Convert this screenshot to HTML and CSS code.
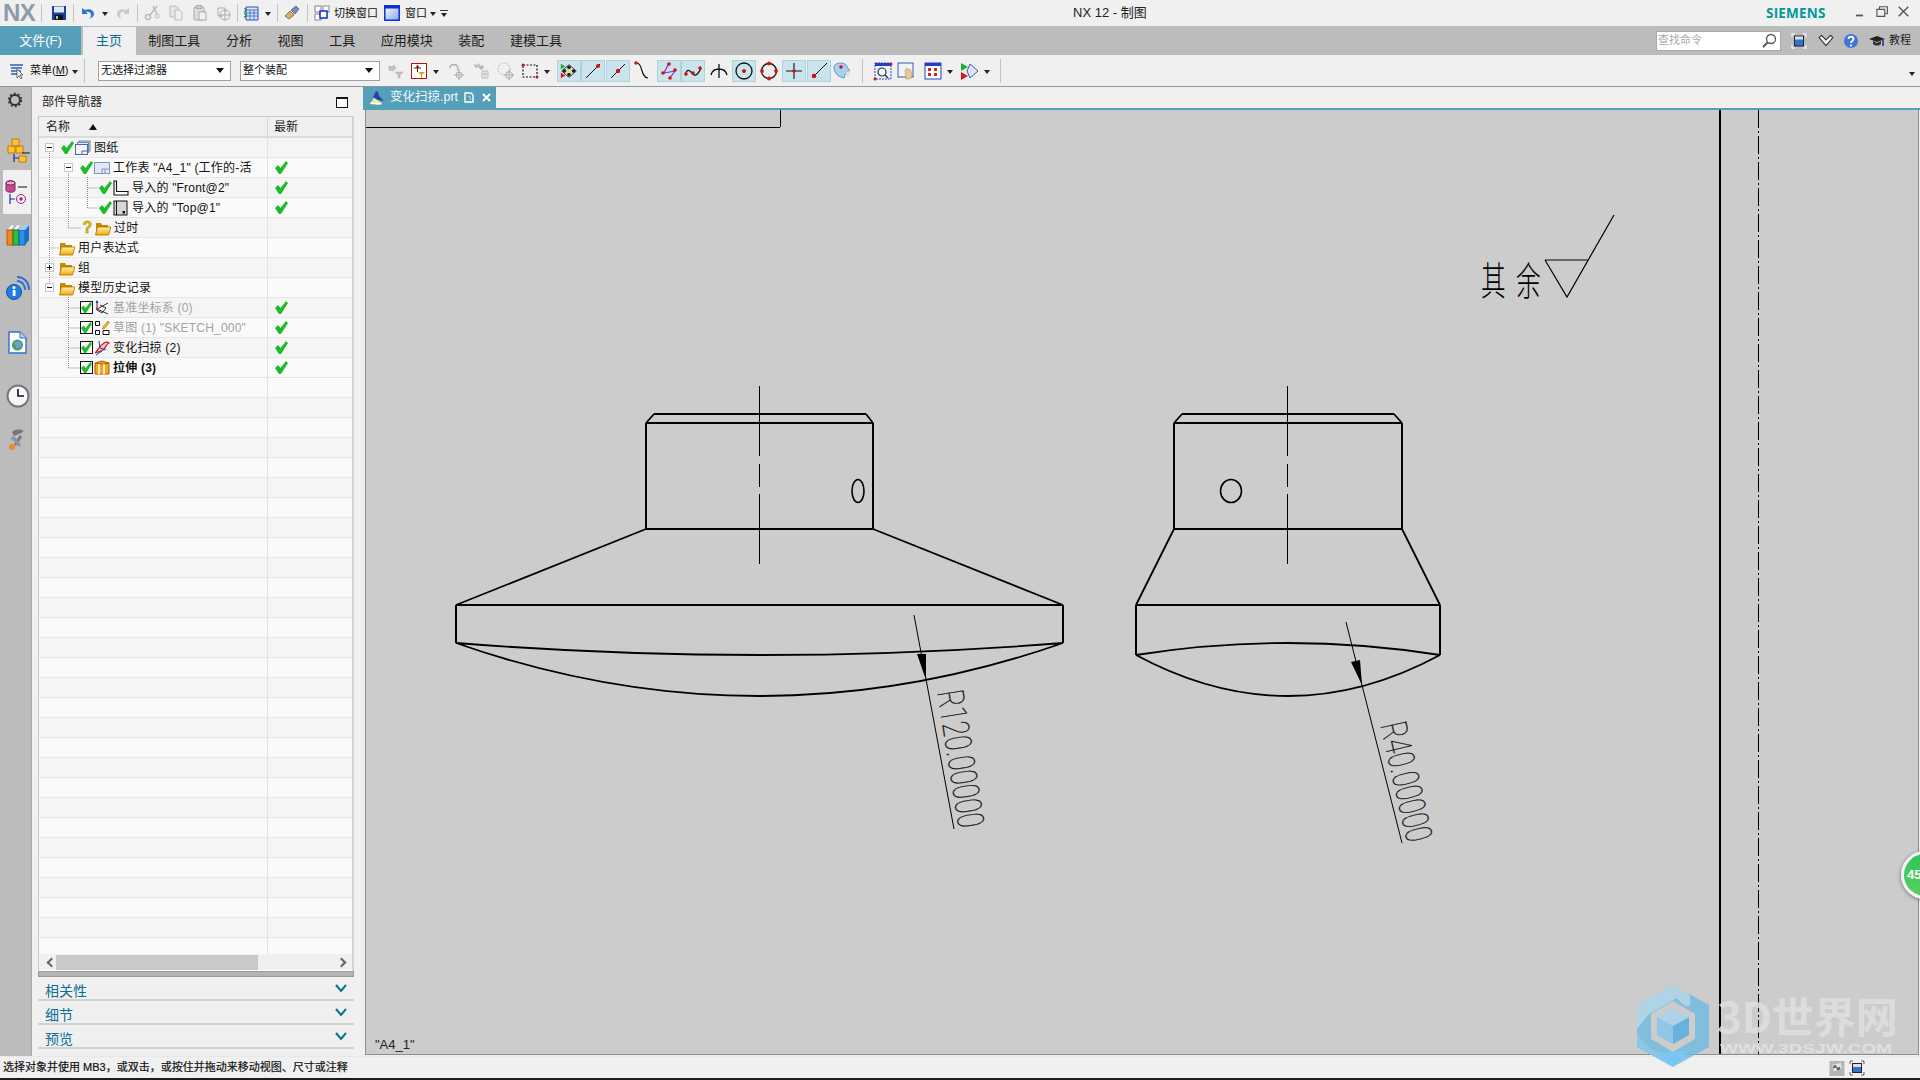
FILE: index.html
```html
<!DOCTYPE html>
<html lang="zh">
<head>
<meta charset="utf-8">
<title>NX 12 - 制图</title>
<link rel="stylesheet" href="styles.css">
</head>
<body>
<svg class="defs" aria-hidden="true">
  <defs>
    <linearGradient id="gf" x1="0" y1="0" x2="0" y2="1"><stop offset="0" stop-color="#fff3b0"/><stop offset="1" stop-color="#f2a900"/></linearGradient>
    <linearGradient id="gb" x1="0" y1="0" x2="1" y2="1"><stop offset="0" stop-color="#ffffff"/><stop offset="1" stop-color="#7fa8e8"/></linearGradient>
    <symbol id="check" viewBox="0 0 13 13"><path d="M0 7l3-3 2.500 3L11 0l2 2-7 11H4z" fill="#1dbb2b"/></symbol>
    <symbol id="folder" viewBox="0 0 16 16"><path d="M1 3h5l1 2h6v10H1z" fill="#c98a00"/><path d="M2.500 7H16l-2.500 8H.5z" fill="url(#gf)" stroke="#a87000" stroke-width=".8"/></symbol>
    <symbol id="sheets" viewBox="0 0 16 16"><rect x="4" y="1" width="11" height="10" fill="#dfe6f4" stroke="#6d83b0"/><rect x="2.500" y="2.500" width="11" height="10" fill="#e6ebf7" stroke="#6d83b0"/><rect x=".5" y="4.500" width="12" height="10" fill="#f2f5fb" stroke="#53689a"/><path d="M7 14V11h5" fill="none" stroke="#53689a"/></symbol>
    <symbol id="sheet" viewBox="0 0 16 16"><rect x=".5" y="2.500" width="15" height="11" fill="#e3e9f6" stroke="#8295bd"/><path d="M8 13v-4h7M11 9v4" fill="none" stroke="#8295bd"/></symbol>
    <symbol id="front" viewBox="0 0 16 16"><path d="M1 1h2.500v10.500H15V15H1z" fill="#fff" stroke="#111" stroke-width="1.100"/></symbol>
    <symbol id="top" viewBox="0 0 16 16"><rect x="1" y="1" width="13" height="14" fill="#d6d6d6" stroke="#111"/><path d="M3.500 1v14" stroke="#111"/><rect x="9.500" y="11" width="2.500" height="2.500" fill="#111"/></symbol>
    <symbol id="datum" viewBox="0 0 16 16"><path d="M3 1v8l11 5M3 9l11-6M6 5l6 3-4 5-5-3" fill="none" stroke="#333"/><path d="M1.500 3L3 0l1.500 3z" fill="#2040c0"/><circle cx="3" cy="9" r="1.200" fill="#d02020"/></symbol>
    <symbol id="sketch" viewBox="0 0 16 16"><path d="M1.500 1.500h4v4h-4zM1.500 10.500h4v4h-4zM9 10.500h6v4H9z" fill="#fff" stroke="#111"/><path d="M9 7l5-6 1.500 1.500-5 6L8.500 9z" fill="#f0c020" stroke="#a06000" stroke-width=".6"/></symbol>
    <symbol id="sweep" viewBox="0 0 16 16"><path d="M1 13c3-2 4-7 9-10 2-1 4-1 5 0-3 1-3 5-6 7-3 2-5 2-8 3z" fill="#f3c2c2" stroke="#d01818" stroke-width="1.200"/><path d="M5 1l1 7 6 2M2 15l6-4" fill="none" stroke="#2540c0"/></symbol>
    <symbol id="extrude" viewBox="0 0 16 16"><path d="M1 3l7-2 7 2v11H1z" fill="#f7a520" stroke="#b35b00"/><path d="M5 3v11M10 3v11" stroke="#fff2b0" stroke-width="2"/><path d="M1 3l7 1 7-1" fill="none" stroke="#b35b00"/></symbol>
    <symbol id="save" viewBox="0 0 16 16"><path d="M1 1h14v14H1z" fill="#1a3f9a"/><rect x="3" y="1.500" width="10" height="6" fill="#dfe8fa"/><rect x="4" y="10" width="8" height="5" fill="#111"/><rect x="5" y="11" width="2" height="3" fill="#bbb"/></symbol>
    <symbol id="undo" viewBox="0 0 16 16"><path d="M2 3v6h6L6 7c3-1 5 1 5 3 0 2-1 3-2 4 3-1 5-3 5-5 0-4-5-6-9-4z" fill="#2f74d0"/></symbol>
    <symbol id="redo" viewBox="0 0 16 16"><path d="M14 3v6H8l2-2c-3-1-5 1-5 3 0 2 1 3 2 4-3-1-5-3-5-5 0-4 5-6 9-4z" fill="#c9c9c9"/></symbol>
    <symbol id="cut" viewBox="0 0 16 16"><path d="M13 1L6 10M9 1l4 8" fill="none" stroke="#bbb" stroke-width="1.500"/><circle cx="4" cy="12" r="2.500" fill="none" stroke="#bbb" stroke-width="1.500"/><circle cx="13" cy="11" r="2" fill="none" stroke="#bbb"/></symbol>
    <symbol id="copy" viewBox="0 0 16 16"><path d="M2 1h6l2 2v9H2z" fill="#e6e6e6" stroke="#bbb"/><path d="M7 5h5l2 2v8H7z" fill="#eee" stroke="#bbb"/></symbol>
    <symbol id="paste" viewBox="0 0 16 16"><rect x="2" y="2" width="10" height="13" rx="1" fill="#ddd" stroke="#aaa"/><rect x="4.500" y=".5" width="5" height="3" fill="#ccc" stroke="#aaa"/><rect x="7" y="7" width="7" height="8" fill="#f2f2f2" stroke="#aaa"/></symbol>
    <symbol id="pastesp" viewBox="0 0 16 16"><path d="M2 3h7v4M2 3v8h5" fill="none" stroke="#aaa"/><circle cx="9" cy="10" r="5" fill="none" stroke="#aaa"/><path d="M9 5v10M4 10h10" stroke="#aaa"/></symbol>
    <symbol id="table" viewBox="0 0 16 16"><path d="M3 2h12v13H3z" fill="#d8e4f8" stroke="#2a4fb0"/><path d="M3 5h12M3 8h12M3 11h12M7 5v10M11 5v10" stroke="#2a4fb0" stroke-width=".7"/><path d="M1 4c3-1 3 3 0 3M1 9c3-1 3 3 0 3" fill="none" stroke="#1b8a3a" stroke-width="1.300"/></symbol>
    <symbol id="brush" viewBox="0 0 16 16"><path d="M1 11l5-5 4 4-5 4z" fill="#d9b26a" stroke="#6a4a10" stroke-width=".7"/><path d="M7 5l5-4 3 3-4 5z" fill="#7a8bb8" stroke="#3a4a80" stroke-width=".7"/></symbol>
    <symbol id="switch" viewBox="0 0 16 16"><rect x="1" y="1" width="6" height="6" fill="#fff" stroke="#888"/><rect x="9" y="1" width="6" height="6" fill="#fff" stroke="#888"/><rect x="1" y="9" width="6" height="6" fill="#fff" stroke="#888"/><rect x="6" y="6" width="7" height="7" fill="#fff" stroke="#0b2ad8" stroke-width="1.500"/></symbol>
    <symbol id="window" viewBox="0 0 16 16"><rect x=".8" y=".8" width="14.400" height="14.400" fill="url(#gb)" stroke="#0b2ad8" stroke-width="1.500"/><rect x="1" y="1" width="14" height="2.500" fill="#0b2ad8"/></symbol>
    <symbol id="menuic" viewBox="0 0 16 16"><path d="M1 2h13M2 5h11M2 8h10M2 11h7" stroke="#2b60b0" stroke-width="1.300"/><path d="M8 6v9l2-2 2 3 1-1-2-3h3z" fill="#fff" stroke="#333" stroke-width=".7"/></symbol>
    <symbol id="fgray" viewBox="0 0 16 16"><path d="M1 3l3 1 2-2 2 3-3 3-4-1zM7 9h8l-3 3v3h-2v-3z" fill="#c2c2c2" stroke="#aaa" stroke-width=".5"/></symbol>
    <symbol id="fred" viewBox="0 0 16 16"><rect x=".5" y=".5" width="15" height="15" fill="#fff" stroke="#b01515"/><path d="M3 5h7M6.500 2v7" stroke="#222"/><path d="M5 3.500l1.500-1.500L8 3.500 6.500 7z" fill="#c41212"/><path d="M7 9h7l-3 3v3h-1v-3z" fill="#f0a010"/></symbol>
    <symbol id="t1" viewBox="0 0 20 20"><path d="M3 7c0-4 7-5 8 0" fill="none" stroke="#aaa" stroke-width="1.500"/><path d="M11 8l-2-1 2 3 2-3z" fill="#aaa"/><circle cx="12" cy="14" r="3" fill="none" stroke="#aaa"/><path d="M12 9v10M7 14h10" stroke="#aaa"/></symbol>
    <symbol id="t2" viewBox="0 0 20 20"><path d="M2 3l3 1 2-2 1 3 3-1 1 3-3 2-3-3-3 1z" fill="#bbb"/><path d="M10 10h6v7h-6z" fill="#eee" stroke="#bbb"/><path d="M13 10v7M10 13h6" stroke="#bbb"/></symbol>
    <symbol id="t3" viewBox="0 0 20 20"><circle cx="8" cy="8" r="6" fill="none" stroke="#aaa" stroke-dasharray="1.500 1.500"/><circle cx="13" cy="14" r="3.500" fill="none" stroke="#aaa"/><path d="M13 9v10M8 14h10" stroke="#aaa"/></symbol>
    <symbol id="t4" viewBox="0 0 20 20"><rect x="3" y="4" width="14" height="12" fill="none" stroke="#111" stroke-width="1.200" stroke-dasharray="2 1.500"/><circle cx="3" cy="4" r="1.500" fill="#d01515"/><circle cx="17" cy="16" r="1.500" fill="#d01515"/></symbol>
    <symbol id="snap1" viewBox="0 0 22 20"><path d="M11 3l8 7-8 7-8-7z" fill="none" stroke="#333"/><circle cx="11" cy="6" r="2" fill="#222"/><circle cx="6" cy="10" r="2" fill="#222"/><circle cx="16" cy="10" r="2" fill="#222"/><circle cx="11" cy="14" r="2" fill="#222"/><circle cx="11" cy="10" r="2.200" fill="#ffe040"/><path d="M2 2l5 3-5 3z" fill="#18b030"/><path d="M2 12l5 3-5 3z" fill="#d81818"/></symbol>
    <symbol id="snap2" viewBox="0 0 20 20"><path d="M3 17L17 3" stroke="#111"/><circle cx="15" cy="5" r="2" fill="#d01515"/></symbol>
    <symbol id="snap3" viewBox="0 0 20 20"><path d="M3 17L17 3" stroke="#111"/><circle cx="10" cy="10" r="2.200" fill="#d01515"/></symbol>
    <symbol id="snap4" viewBox="0 0 20 20"><path d="M5 2c6 0 3 14 11 15" fill="none" stroke="#111" stroke-width="1.200"/><circle cx="4" cy="2" r="1.800" fill="#d01515"/></symbol>
    <symbol id="snap5" viewBox="0 0 20 20"><path d="M10 2L5 12l11-2-6 8" fill="none" stroke="#8a2fc0" stroke-width="1.200"/><circle cx="10" cy="3" r="1.800" fill="#d01515"/><circle cx="4" cy="12" r="1.800" fill="#d01515"/><circle cx="16" cy="9" r="1.800" fill="#d01515"/><circle cx="11" cy="17" r="1.800" fill="#d01515"/></symbol>
    <symbol id="snap6" viewBox="0 0 20 20"><path d="M2 14c3-10 7-1 9 0s5-2 7-7" fill="none" stroke="#111" stroke-width="1.300"/><circle cx="3" cy="13" r="1.800" fill="#d01515"/><circle cx="10" cy="12" r="1.800" fill="#d01515"/><circle cx="17" cy="7" r="1.800" fill="#d01515"/></symbol>
    <symbol id="snap7" viewBox="0 0 20 20"><path d="M2 14c2-8 14-8 16 0M10 3v14" fill="none" stroke="#111" stroke-width="1.300"/></symbol>
    <symbol id="snap8" viewBox="0 0 20 20"><circle cx="10" cy="10" r="8" fill="none" stroke="#111" stroke-width="1.300"/><circle cx="10" cy="10" r="2" fill="#d01515"/></symbol>
    <symbol id="snap9" viewBox="0 0 20 20"><circle cx="10" cy="10" r="7.500" fill="none" stroke="#111" stroke-width="1.300"/><circle cx="10" cy="2.500" r="1.900" fill="#d01515"/><circle cx="3" cy="10" r="1.900" fill="#d01515"/><circle cx="17" cy="10" r="1.900" fill="#d01515"/><circle cx="10" cy="17.500" r="1.900" fill="#d01515"/></symbol>
    <symbol id="snap10" viewBox="0 0 20 20"><path d="M10 2v16M2 10h16" stroke="#111" stroke-width="1.100"/><circle cx="10" cy="10" r="1.800" fill="#d01515"/></symbol>
    <symbol id="snap11" viewBox="0 0 20 20"><path d="M5 15L18 2" stroke="#111"/><circle cx="5" cy="15" r="2.300" fill="#d01515"/></symbol>
    <symbol id="snap12" viewBox="0 0 20 20"><path d="M2 6c0-4 8-5 11-3l5 7-4 1-2 6C6 16 2 12 2 6z" fill="#a9cff2" stroke="#5f95c8"/><path d="M13 11l5-1-2 7z" fill="#ddd"/><circle cx="9" cy="6" r="1.800" fill="#d01515"/></symbol>
    <symbol id="v1" viewBox="0 0 20 20"><rect x="2" y="2" width="16" height="16" fill="#eef3fc" stroke="#2040c8" stroke-dasharray="2 1"/><rect x="2" y="2" width="16" height="3" fill="#2040c8"/><circle cx="9" cy="11" r="4" fill="none" stroke="#333" stroke-width="1.200"/><path d="M12 14l3 3" stroke="#333" stroke-width="1.500"/><circle cx="2" cy="18" r="1.500" fill="#d01515"/><circle cx="18" cy="3" r="1.500" fill="#d01515"/></symbol>
    <symbol id="v2" viewBox="0 0 20 20"><rect x="2" y="2" width="15" height="14" fill="#eef3fc" stroke="#3c58a8"/><path d="M9 9l2-2 1 2 2-1 1 2 1 5-2 3h-4z" fill="#eec79a" stroke="#b08050" stroke-width=".5"/></symbol>
    <symbol id="v3" viewBox="0 0 20 20"><rect x="2" y="2" width="16" height="16" fill="#fff" stroke="#2040c8"/><rect x="2" y="2" width="16" height="3" fill="#2040c8"/><path d="M5 7h3v3H5zM11 7h3v3h-3zM5 12h3v3H5zM11 12h3v3h-3z" fill="#d82020"/></symbol>
    <symbol id="v4" viewBox="0 0 20 20"><path d="M10 3l8 7-8 7-3-7z" fill="#dfe4fa" stroke="#3c58a8"/><path d="M1 2l7 4-7 4z" fill="#18b030"/><path d="M1 11l7 4-7 4z" fill="#d81818"/></symbol>
    <symbol id="gear" viewBox="0 0 16 16"><circle cx="8" cy="8" r="5" fill="none" stroke="#333" stroke-width="2"/><circle cx="8" cy="8" r="6.500" fill="none" stroke="#333" stroke-width="1.500" stroke-dasharray="2 2.080"/></symbol>
    <symbol id="s-asm" viewBox="0 0 24 26"><path d="M6 2h7v7H6zM2 9h7v7H2zM10 9h7v7h-7z" fill="#fdc530" stroke="#c87a00"/><path d="M13 19h7v6h-7z" fill="#fdc530" stroke="#c87a00"/><path d="M16 16h8" stroke="#111"/><path d="M8 17v8M8 21h5" stroke="#1a2ea0" stroke-width="1.200"/></symbol>
    <symbol id="s-part" viewBox="0 0 24 26"><path d="M1 4c0-3 9-3 9 0v7c0 3-9 3-9 0z" fill="#c64a90" stroke="#7a2060"/><ellipse cx="5.500" cy="4" rx="4.500" ry="2" fill="#eeb0d0" stroke="#7a2060"/><path d="M13 8h9" stroke="#111"/><path d="M5 15v10M5 20h5" stroke="#1a2ea0" stroke-width="1.200"/><circle cx="16" cy="20" r="4.500" fill="none" stroke="#a02080"/><circle cx="16" cy="20" r="1.700" fill="#a02080"/></symbol>
    <symbol id="s-books" viewBox="0 0 24 22"><path d="M1 6l4-5h4L5 6z" fill="#fff" stroke="#bbb"/><path d="M7 6l4-5h4l-4 5z" fill="#fff" stroke="#bbb"/><rect x="1" y="6" width="6" height="15" fill="#f08a1e" stroke="#b85a00"/><rect x="7" y="6" width="6" height="15" fill="#2fc03a" stroke="#108020"/><rect x="13" y="6" width="6" height="15" fill="#2f8fe0" stroke="#1060b0"/><path d="M19 6l4-5v15l-4 5z" fill="#1b6fc8"/><path d="M13 6l4-5h6l-4 5z" fill="#9ccdf5"/></symbol>
    <symbol id="s-info" viewBox="0 0 24 24"><path d="M11 1c7 0 12 5 12 13M11 5c5 0 8 4 8 9" fill="none" stroke="#2f6fd0" stroke-width="2"/><circle cx="8" cy="16" r="7.500" fill="#1e7fe0" stroke="#104ea8"/><rect x="6.700" y="14" width="2.800" height="6" fill="#fff"/><circle cx="8" cy="11.500" r="1.500" fill="#fff"/></symbol>
    <symbol id="s-doc" viewBox="0 0 20 24"><path d="M1 1h11l6 6v15H1z" fill="#fff" stroke="#2f6fd0" stroke-width="1.400"/><path d="M12 1v6h6" fill="#bcd4f4" stroke="#2f6fd0"/><circle cx="9.500" cy="14" r="5.500" fill="#46a050"/><path d="M6 11l6-1 2 5-5 3z" fill="#6aa0d8"/></symbol>
    <symbol id="s-clock" viewBox="0 0 24 24"><circle cx="12" cy="12" r="10.500" fill="#f4f7fc" stroke="#777" stroke-width="2"/><path d="M12 5v7h6" fill="none" stroke="#111" stroke-width="1.600"/></symbol>
    <symbol id="s-tool" viewBox="0 0 20 24"><path d="M4 4c3-3 8-3 12-1l-3 2-7 3zM12 7l-6 9 2 2 6-9z" fill="#777"/><path d="M5 8l3 2 5 7-2 2-6-7-3-1z" fill="#8a93a8"/><circle cx="4" cy="19" r="3" fill="#f08a1e"/></symbol>
  </defs>
</svg>

<header class="titlebar">
  <span class="nxlogo">NX</span><i class="sep s1"></i>
  <span class="ic"><svg class="i14"><use href="#save"/></svg></span><i class="sep"></i>
  <span class="ic"><svg class="i14"><use href="#undo"/></svg></span><span class="dd"></span>
  <span class="ic"><svg class="i14"><use href="#redo"/></svg></span><i class="sep"></i>
  <span class="ic"><svg class="i14"><use href="#cut"/></svg></span>
  <span class="ic"><svg class="i14"><use href="#copy"/></svg></span>
  <span class="ic"><svg class="i14"><use href="#paste"/></svg></span>
  <span class="ic"><svg class="i14"><use href="#pastesp"/></svg></span><i class="sep s2"></i>
  <span class="ic"><svg class="i14"><use href="#table"/></svg></span><span class="dd"></span><i class="sep s3"></i>
  <span class="ic"><svg class="i14"><use href="#brush"/></svg></span><i class="sep s3"></i>
  <span class="ic2"><svg class="i14"><use href="#switch"/></svg></span><span class="qt">切换窗口</span>
  <span class="ic3"><svg class="i16"><use href="#window"/></svg></span><span class="qt">窗口</span><span class="dd dd2"></span><span class="ddm"></span>
  <span class="apptitle">NX 12 - 制图</span>
  <span class="siemens">SIEMENS</span>
  <svg class="winbtns" viewBox="0 0 70 16"><path d="M0 12h8" stroke="#555" stroke-width="2"/><path d="M24 5h9v8h-9zM27 5V2h9v8h-3" fill="none" stroke="#555" stroke-width="1.300"/><path d="M49 2l11 11M60 2L49 13" stroke="#555" stroke-width="1.600"/></svg>
</header>

<nav class="ribbon">
  <span class="filetab">文件(F)</span>
  <span class="rtab active">主页</span>
  <span class="rtab">制图工具</span><span class="rtab">分析</span><span class="rtab">视图</span><span class="rtab">工具</span><span class="rtab">应用模块</span><span class="rtab">装配</span><span class="rtab">建模工具</span>
  <div class="rright">
    <div class="search"><span>查找命令</span><svg class="i16" viewBox="0 0 16 16"><circle cx="10" cy="6" r="4.500" fill="#fff" stroke="#555" stroke-width="1.300"/><path d="M7 9l-5 5" stroke="#555" stroke-width="2"/></svg></div>
    <svg class="i16 rr1" viewBox="0 0 16 16"><path d="M1 4V1h3M12 1h3v3M1 12v3h3M12 15h3v-3" fill="none" stroke="#eee" stroke-width="1.300"/><rect x="3.500" y="3" width="9" height="10" fill="#2f74d0" stroke="#223"/><rect x="4" y="3.500" width="8" height="3" fill="#dde"/></svg>
    <svg class="i14 rr2" viewBox="0 0 14 14"><path d="M1 4l2-2 4 4 4-4 2 2-6 7z" fill="#fff" stroke="#333"/></svg>
    <svg class="i16 rr3" viewBox="0 0 16 16"><circle cx="8" cy="8" r="7" fill="#3f74d8"/><path d="M5.500 6c0-3 5-3 5 0 0 2-2.500 2-2.500 4" fill="none" stroke="#fff" stroke-width="1.800"/><circle cx="8" cy="12.500" r="1.100" fill="#fff"/></svg>
    <svg class="i16 rr4" viewBox="0 0 16 16"><path d="M0 6l8-3 8 3-8 3z" fill="#222"/><path d="M4 8v3c2 2 6 2 8 0V8l-4 2z" fill="#333"/><path d="M14 7v6" stroke="#1a2ea0" stroke-width="1.500"/></svg>
    <span class="rtxt">教程</span>
  </div>
</nav>

<section class="toolbar">
  <svg class="i16 tm"><use href="#menuic"/></svg><span class="menu">菜单(<u>M</u>)</span><span class="dd"></span><i class="sep tsep"></i>
  <div class="combo c1"><span>无选择过滤器</span><b></b></div>
  <div class="combo c2"><span>整个装配</span><b></b></div>
  <span class="tb"><svg class="i16"><use href="#fgray"/></svg></span>
  <span class="tb m-1"><svg class="i16"><use href="#fred"/></svg></span><span class="dd td"></span>
  <span class="tb m2"><svg class="i20"><use href="#t1"/></svg></span>
  <span class="tb m1"><svg class="i20"><use href="#t2"/></svg></span>
  <span class="tb"><svg class="i20"><use href="#t3"/></svg></span>
  <span class="tb"><svg class="i20"><use href="#t4"/></svg></span><span class="dd td"></span>
  <span class="tb on m3"><svg class="i20"><use href="#snap1"/></svg></span>
  <span class="tb on"><svg class="i20"><use href="#snap2"/></svg></span>
  <span class="tb on m1"><svg class="i20"><use href="#snap3"/></svg></span>
  <span class="tb"><svg class="i20"><use href="#snap4"/></svg></span>
  <span class="tb on m3"><svg class="i20"><use href="#snap5"/></svg></span>
  <span class="tb on"><svg class="i20"><use href="#snap6"/></svg></span>
  <span class="tb m2"><svg class="i20"><use href="#snap7"/></svg></span>
  <span class="tb on m1"><svg class="i20"><use href="#snap8"/></svg></span>
  <span class="tb m1"><svg class="i20"><use href="#snap9"/></svg></span>
  <span class="tb on m1"><svg class="i20"><use href="#snap10"/></svg></span>
  <span class="tb on m1"><svg class="i20"><use href="#snap11"/></svg></span>
  <span class="tb m-1"><svg class="i20"><use href="#snap12"/></svg></span>
  <i class="sep tsep2"></i>
  <span class="tb"><svg class="i20"><use href="#v1"/></svg></span>
  <span class="tb m-1"><svg class="i20"><use href="#v2"/></svg></span>
  <span class="tb m3"><svg class="i20"><use href="#v3"/></svg></span><span class="dd td"></span>
  <span class="tb m1"><svg class="i20"><use href="#v4"/></svg></span><span class="dd td2"></span>
  <i class="sep tsep3"></i>
  <span class="dd tend"></span>
</section>

<main class="main">
  <aside class="sidebar">
    <svg class="gear"><use href="#gear"/></svg>
    <svg class="s1i"><use href="#s-asm"/></svg>
    <div class="stab"><svg class="s2i"><use href="#s-part"/></svg></div>
    <svg class="s3i"><use href="#s-books"/></svg>
    <svg class="s4i"><use href="#s-info"/></svg>
    <svg class="s5i"><use href="#s-doc"/></svg>
    <svg class="s6i"><use href="#s-clock"/></svg>
    <svg class="s7i"><use href="#s-tool"/></svg>
  </aside>

  <section class="panel">
    <div class="phead"><span>部件导航器</span><i class="maxbtn"></i></div>
    <div class="table">
      <div class="thead"><div class="tn">名称<i class="sort"></i></div><div class="tl">最新</div></div>
      <div class="tbody">
        <svg class="dots" viewBox="39 138 230 240"><path d="M49.500 153V283M49.500 248H59M68.500 165V228H81M87.500 177V208M87.500 188H99M87.500 208H99M68.500 297V368M68.500 308H80M68.500 328H80M68.500 348H80M68.500 368H80" fill="none" stroke="#8e8e8e" stroke-dasharray="1 1"/></svg>
        <div class="row"><div class="name p6"><i class="ex mi wc"></i><svg class="c13"><use href="#check"/></svg><svg class="n16"><use href="#sheets"/></svg><span>图纸</span></div><div class="st"></div></div>
        <div class="row"><div class="name p25"><i class="ex mi wc"></i><svg class="c13"><use href="#check"/></svg><svg class="n16"><use href="#sheet"/></svg><span>工作表 "A4_1" (工作的-活</span></div><div class="st"><svg class="c13"><use href="#check"/></svg></div></div>
        <div class="row"><div class="name p60"><svg class="c13"><use href="#check"/></svg><svg class="n16"><use href="#front"/></svg><span>导入的 "Front@2"</span></div><div class="st"><svg class="c13"><use href="#check"/></svg></div></div>
        <div class="row"><div class="name p60"><svg class="c13"><use href="#check"/></svg><svg class="n16"><use href="#top"/></svg><span>导入的 "Top@1"</span></div><div class="st"><svg class="c13"><use href="#check"/></svg></div></div>
        <div class="row"><div class="name p42"><span class="qm">?</span><svg class="n16"><use href="#folder"/></svg><span>过时</span></div><div class="st"></div></div>
        <div class="row"><div class="name p20"><svg class="f16"><use href="#folder"/></svg><span>用户表达式</span></div><div class="st"></div></div>
        <div class="row"><div class="name p6"><i class="ex pl"></i><svg class="f16"><use href="#folder"/></svg><span>组</span></div><div class="st"></div></div>
        <div class="row"><div class="name p6"><i class="ex mi"></i><svg class="f16"><use href="#folder"/></svg><span>模型历史记录</span></div><div class="st"></div></div>
        <div class="row"><div class="name p41"><i class="cb"><svg><use href="#check"/></svg></i><svg class="n16"><use href="#datum"/></svg><span class="dim">基准坐标系 (0)</span></div><div class="st"><svg class="c13"><use href="#check"/></svg></div></div>
        <div class="row"><div class="name p41"><i class="cb"><svg><use href="#check"/></svg></i><svg class="n16"><use href="#sketch"/></svg><span class="dim">草图 (1) "SKETCH_000"</span></div><div class="st"><svg class="c13"><use href="#check"/></svg></div></div>
        <div class="row"><div class="name p41"><i class="cb"><svg><use href="#check"/></svg></i><svg class="n16"><use href="#sweep"/></svg><span>变化扫掠 (2)</span></div><div class="st"><svg class="c13"><use href="#check"/></svg></div></div>
        <div class="row"><div class="name p41"><i class="cb"><svg><use href="#check"/></svg></i><svg class="n16"><use href="#extrude"/></svg><span class="bold">拉伸 (3)</span></div><div class="st"><svg class="c13"><use href="#check"/></svg></div></div>
        <div class="empties"></div>
      </div>
      <div class="hscroll"><i class="la"></i><div class="track"><div class="thumb"></div></div><i class="ra"></i></div>
    </div>
    <div class="splitter"></div>
    <div class="acc"><span>相关性</span><svg class="chev" viewBox="0 0 12 9"><path d="M1 1l5 6 5-6" fill="none" stroke="#0b6f8e" stroke-width="2"/></svg></div>
    <div class="acc"><span>细节</span><svg class="chev" viewBox="0 0 12 9"><path d="M1 1l5 6 5-6" fill="none" stroke="#0b6f8e" stroke-width="2"/></svg></div>
    <div class="acc"><span>预览</span><svg class="chev" viewBox="0 0 12 9"><path d="M1 1l5 6 5-6" fill="none" stroke="#0b6f8e" stroke-width="2"/></svg></div>
  </section>

  <section class="work">
    <div class="doctabs">
      <div class="doctab">
        <svg class="i16" viewBox="0 0 16 16"><path d="M1 14l4-6 8 5-3 2z" fill="#e8f0a0"/><path d="M4 7l3-6 2 1 1 4 5 5-6-1z" fill="#2a3fb0"/><path d="M1 13l12 1" stroke="#fff"/></svg>
        <span>变化扫掠.prt</span>
        <svg class="dicon" viewBox="0 0 10 11"><path d="M1 1h6l2 2v7H1z" fill="none" stroke="#fff" stroke-width="1.400"/><path d="M4 5h2v3" stroke="#fff"/></svg>
        <svg class="dx" viewBox="0 0 9 9"><path d="M1 1l7 7M8 1L1 8" stroke="#fff" stroke-width="2"/></svg>
      </div>
    </div>
    <div class="canvas">
      <svg class="drawing" viewBox="366 110 1552 944">
        <g class="thick" shape-rendering="crispEdges">
          <path d="M654 414H866M646 423H873M646 423V529M873 423V529M646 529H873M456 605H1063M456 605V643M1063 605V643"/>
          <path d="M1182 414H1394M1174 423H1402M1174 423V529M1402 423V529M1174 529H1402M1136 605H1440M1136 605V655M1440 605V655"/>
        </g>
        <g class="thick2">
          <path d="M646 423L654 414M873 423L866 414M646 529L456 605M873 529L1063 605"/>
          <path d="M456 643Q759 667 1063 643M456 643Q759 749 1063 643"/>
          <path d="M1174 423L1182 414M1402 423L1394 414M1174 529L1136 605M1402 529L1440 605"/>
          <path d="M1136 655Q1288 631 1440 655M1136 655Q1288 737 1440 655"/>
          <path class="thin15" d="M1545 260H1588M1545 260L1567 297L1614 215"/>
        </g>
        <g class="thin">
          <ellipse class="hole" cx="858" cy="491" rx="6" ry="11.500"/>
          <ellipse class="hole" cx="1231" cy="491" rx="10.500" ry="11.500"/>
          <path shape-rendering="crispEdges" d="M759 386V456M759 464V487M759 494V564M1287 386V456M1287 464V487M1287 494V564"/>
          <path d="M914 615L954 829M1346 622L1402 843"/>
          <path shape-rendering="crispEdges" d="M366 127H780M780 110V127"/>
        </g>
        <path class="arrow" d="M917 654L926 654L926 680zM1351 662L1360 660L1362 685z"/>
        <path shape-rendering="crispEdges" class="border1" d="M1720 110V1054"/>
        <path shape-rendering="crispEdges" class="border2" d="M1758 110V1054"/>
        <text class="dimtxt" transform="translate(937 692) rotate(81)" textLength="139" lengthAdjust="spacingAndGlyphs">R120.00000</text>
        <text class="dimtxt" transform="translate(1380 725) rotate(77)" textLength="122" lengthAdjust="spacingAndGlyphs">R40.00000</text>
        <text class="rest" transform="translate(1481 295) scale(.88 1.400)">其</text>
        <text class="rest" transform="translate(1516 295) scale(.88 1.400)">余</text>
        <text class="sheetname" x="375" y="1049">"A4_1"</text>
      </svg>
    </div>
  </section>
</main>

<footer class="status">
  <span>选择对象并使用 MB3，或双击，或按住并拖动来移动视图、尺寸或注释</span>
  <svg class="flag" viewBox="0 0 16 16"><rect width="16" height="16" fill="#b5b5b5"/><path d="M3 4l9-2 1 7-8 2z" fill="#e8e8e8"/><path d="M4 5l3-1 1 3 3-1 1 3-4 1-1-3-3 1z" fill="#666"/></svg>
  <svg class="i16 sticon" viewBox="0 0 16 16"><path d="M1 4V1h3M12 1h3v3M1 12v3h3M12 15h3v-3" fill="none" stroke="#666"/><rect x="3.500" y="3.500" width="9" height="9" fill="#2f74d0" stroke="#223"/><rect x="4" y="4" width="8" height="3" fill="#dde"/></svg>
</footer>
<div class="taskbar"></div>

<div class="badge"><span>45</span></div>

<svg class="watermark" viewBox="0 0 270 90">
  <path d="M36 0L72 20V62L36 82L0 62V20Z" fill="#6cb8e0" opacity=".78"/>
  <path d="M36 0L52 9C56 20 52 28 40 13L12 29 0 44V20Z" fill="#c4dde9" opacity=".7"/>
  <path d="M0 44C0 50 10 66 26 68L36 82 0 62Z" fill="#8ac6e6"/>
  <path d="M20 69L52 66 36 82Z" fill="#76c8f2"/>
  <path d="M36 16L58 29V54L36 67L14 54V29Z" fill="#cccccc"/>
  <path d="M36 23L52 32L36 41L20 32Z" fill="#aed3e6"/>
  <path d="M20 32L36 41V59L20 50Z" fill="#8fc7e6"/>
  <path d="M52 32L36 41V59L52 50Z" fill="#68b3dc"/>
  <text class="wm1" x="80" y="48">3D世界网</text>
  <text class="wm2" x="83" y="68" textLength="172" lengthAdjust="spacingAndGlyphs">WWW.3DSJW.COM</text>
</svg>
</body>
</html>
```

FILE: styles.css
```css
* { box-sizing: border-box; }
html, body { margin: 0; padding: 0; }
body {
  width: 1920px; height: 1080px; overflow: hidden; position: relative;
  display: flex; flex-direction: column; background: #f0f0f0; color: #111;
  font: 12px/1 "Liberation Sans", "Noto Sans CJK SC", sans-serif;
}
svg { display: block; flex: none; }
i { font-style: normal; display: block; flex: none; }
.defs { position: absolute; width: 0; height: 0; }
.i14 { width: 16px; height: 16px; }
.i16 { width: 16px; height: 16px; }
.i20 { width: 20px; height: 20px; }

.titlebar { height: 26px; display: flex; align-items: center; padding-left: 3px; flex: none; position: relative; }
.nxlogo { width: 35px; font: 700 24px/1 "Liberation Sans", sans-serif; color: #8c9cab; letter-spacing: -.5px; }
.sep { width: 1px; height: 18px; background: #c4c4c4; margin: 0 2px; }
.sep.s1 { margin: 0 5px 0 3px; }
.sep.s2 { margin: 0 1px; }
.sep.s3 { margin: 0 2px 0 3px; }
.ic { width: 24px; display: flex; justify-content: center; }
.ic2 { width: 24px; display: flex; justify-content: center; }
.ic3 { width: 20px; margin-left: 4px; margin-right: 3px; display: flex; justify-content: center; }
.qt { font-size: 11px; color: #111; }
.dd { width: 11px; height: 12px; position: relative; flex: none; }
.dd::after { content: ""; position: absolute; left: 2px; top: 5px; border: 3px solid transparent; border-top: 4px solid #222; border-bottom: 0; }
.dd2 { margin-left: 1px; }
.ddm { width: 8px; height: 6px; border-top: 1px solid #333; position: relative; margin-left: 1px; }
.ddm::after { content: ""; position: absolute; left: 1px; top: 2px; border: 3px solid transparent; border-top: 4px solid #222; border-bottom: 0; }
.apptitle { position: absolute; left: 1073px; top: 6px; font-size: 13px; color: #222; }
.siemens { position: absolute; left: 1766px; top: 7px; font: 700 13.500px/1 "Open Sans", "Liberation Sans", sans-serif; color: #009999; letter-spacing: .2px; }
.winbtns { position: absolute; left: 1856px; top: 5px; width: 61px; height: 14px; }

.ribbon { height: 29px; background: #bcbcbc; display: flex; align-items: stretch; flex: none; }
.filetab { width: 81px; background: #569fb9; color: #fff; font-size: 13px; display: flex; align-items: center; justify-content: center; padding-bottom: 1px; }
.rtab { padding: 0 12.800px 1px; font-size: 13px; display: flex; align-items: center; color: #1c1c1c; }
.rtab.active { margin: 1px 0 0 1.500px; padding: 0 13.500px 2px; background: #f0f0f0; color: #0a6c8c; }
.rright { margin-left: auto; display: flex; align-items: center; padding-right: 9px; }
.search { width: 125px; height: 20px; background: #fff; border: 1px solid #a8a8a8; display: flex; align-items: center; justify-content: space-between; padding: 0 3px 0 1px; font-size: 11px; color: #a9a9a9; }
.rr1 { margin-left: 10px; }
.rr2 { margin-left: 11px; }
.rr3 { margin-left: 9px; }
.rr4 { margin-left: 10px; }
.rtxt { margin-left: 4px; font-size: 11px; color: #222; }

.toolbar { height: 32px; border-bottom: 1px solid #8f969b; display: flex; align-items: center; padding: 0 0 0 9px; flex: none; position: relative; }
.tm { margin-right: 5px; }
.menu { font-size: 11px; width: 40px; }
.tsep { height: 24px; margin: 0 0 0 3px; }
.combo { height: 20px; background: #fff; border: 1px solid #a0a0a0; display: flex; align-items: center; justify-content: space-between; font-size: 11px; padding: 0 6px 0 2px; }
.combo b { border: 4px solid transparent; border-top: 5px solid #111; border-bottom: 0; }
.c1 { width: 133px; margin-left: 13px; }
.c2 { width: 140px; margin-left: 9px; margin-right: 4px; }
.tb { width: 24px; height: 22px; display: flex; align-items: center; justify-content: center; flex: none; }
.tb.on { background: #cbe4ec; border: 1px solid #a9d3df; }
.m1 { margin-left: 1px; }
.m2 { margin-left: 2px; }
.m3 { margin-left: 3px; }
.m-1 { margin-left: -1px; }
.td { width: 12px; }
.td2 { width: 10px; }
.tsep2 { height: 24px; margin: 0 8px 0 8px; }
.tsep3 { height: 24px; margin: 0 0 0 8px; }
.tend { position: absolute; left: 1907px; top: 12px; }

.main { flex: 1; display: flex; min-height: 0; }
.sidebar { width: 32px; background: #bcbcbc; border-right: 1px solid #a8a8a8; display: flex; flex-direction: column; align-items: center; flex: none; padding-top: 5px; }
.gear { width: 16px; height: 16px; margin-left: -1px; }
.s1i { width: 24px; height: 26px; margin: 29px 0 0 4px; }
.stab { width: 28px; height: 44px; margin: 7px 0 0 3px; background: #f0f0f0; display: flex; align-items: center; justify-content: center; flex: none; }
.s2i { width: 24px; height: 26px; }
.s3i { width: 24px; height: 22px; margin: 10px 0 0 4px; }
.s4i { width: 24px; height: 24px; margin: 30px 0 0 4px; }
.s5i { width: 20px; height: 24px; margin: 31px 0 0 4px; }
.s6i { width: 24px; height: 24px; margin: 29px 0 0 4px; }
.s7i { width: 20px; height: 24px; margin: 20px 0 0 4px; }

.panel { width: 333px; flex: none; padding: 0 11px 7px 6px; display: flex; flex-direction: column; background: #f0f0f0; }
.phead { height: 29px; display: flex; align-items: center; justify-content: space-between; padding: 1px 6px 0 4px; font-size: 12px; color: #222; flex: none; }
.maxbtn { width: 12px; height: 11px; border: 1px solid #111; border-top-width: 2px; background: #fff; }
.table { width: 316px; flex: 1; min-height: 0; border: 1px solid #c4c4c4; border-width: 1px 2px 2px 1px; border-color: #c8c8c8 #d4d4d4 #fff #c8c8c8; background: #fff; display: flex; flex-direction: column; }
.thead { height: 21px; display: flex; background: #f0f0f0; border-bottom: 2px solid #dcdcdc; flex: none; }
.tn { width: 229px; border-right: 1px solid #d6d6d6; padding: 1px 0 0 7px; display: flex; align-items: center; color: #222; }
.sort { margin-left: 19px; border: 4.500px solid transparent; border-bottom: 6px solid #111; border-top: 0; }
.tl { padding: 1px 0 0 6px; display: flex; align-items: center; color: #222; }
.tbody { flex: 1; min-height: 0; position: relative; display: flex; flex-direction: column; }
.dots { position: absolute; left: 0; top: 0; width: 230px; height: 240px; }
.row { height: 20px; display: flex; flex: none; background: #fafafa; border-bottom: 1px solid #e6e6e6; }
.row:nth-child(even) { background: #f5f5f5; }
.name { width: 229px; display: flex; align-items: center; border-right: 1px solid #e2e2e2; color: #111; white-space: nowrap; position: relative; letter-spacing: .2px; }
.st { flex: 1; display: flex; align-items: center; padding-left: 7px; }
.p6 { padding-left: 6px; } .p20 { padding-left: 20px; } .p25 { padding-left: 25px; } .p41 { padding-left: 41px; } .p42 { padding-left: 42px; } .p60 { padding-left: 60px; }
.c13 { width: 13px; height: 13px; }
.n16 { width: 16px; height: 16px; margin: 0 3px 0 1px; }
.f16 { width: 16px; height: 16px; margin-right: 3px; }
.ex { width: 9px; height: 9px; margin-right: 5px; background: #fff; border: 1px solid #c6c6c6; position: relative; }
.ex.wc { margin-right: 7px; }
.ex::before { content: ""; position: absolute; left: 1px; top: 3px; width: 5px; height: 1px; background: #111; }
.ex.pl::after { content: ""; position: absolute; left: 3px; top: 1px; width: 1px; height: 5px; background: #111; }
.cb { width: 13px; height: 13px; border: 1px solid #111; background: #fff; }
.cb svg { width: 11px; height: 11px; }
.qm { width: 13px; text-align: center; font: 700 16px/1 "Liberation Sans", sans-serif; color: #e2c400; -webkit-text-stroke: .4px #8a7400; }
.dim { color: #a3a3a3; }
.bold { font-weight: 700; }
.empties { flex: 1; min-height: 0; background: repeating-linear-gradient(180deg, #fafafa 0 19px, #e6e6e6 19px 20px, #f5f5f5 20px 39px, #e6e6e6 39px 40px); position: relative; }
.empties::after { content: ""; position: absolute; left: 228px; top: 0; bottom: 0; width: 1px; background: #e2e2e2; }
.hscroll { height: 16px; background: #f0f0f0; display: flex; align-items: center; flex: none; }
.la, .ra { width: 7px; height: 7px; border-left: 2px solid #666; border-bottom: 2px solid #666; transform: rotate(45deg); }
.la { margin: 0 0 0 9px; }
.ra { margin-right: 7px; transform: rotate(225deg); }
.track { flex: 1; height: 15px; margin: 0 8px 0 1px; }
.thumb { width: 202px; height: 15px; background: #c9c9c9; }
.splitter { height: 6px; background: #b4b4b4; border: 1px solid #9a9a9a; flex: none; width: 316px; margin-top: -1px; }
.acc { height: 24px; width: 316px; flex: none; display: flex; align-items: center; justify-content: space-between; border-bottom: 2px solid #d2d2d2; padding: 3px 7px 0 7px; color: #0a6f90; font-size: 14px; }
.acc span { margin-top: 2px; }
.chev { width: 12px; height: 9px; margin-top: -3px; }

.work { flex: 1; min-width: 0; display: flex; flex-direction: column; }
.doctabs { height: 23px; flex: none; border-bottom: 2px solid #569fb9; margin-left: -2px; }
.doctab { width: 133px; height: 21px; background: #569fb9; color: #fff; display: flex; align-items: center; padding-left: 6px; font-size: 12.500px; }
.doctab span { margin-left: 5px; color: #f4fafc; }
.dicon { width: 10px; height: 11px; margin-left: 6px; }
.dx { width: 9px; height: 9px; margin-left: 8px; }
.canvas { flex: 1; min-height: 0; background: #ccc; border: 1px solid #8e8e8e; border-top: 0; margin-right: 1px; margin-bottom: 1px; overflow: hidden; }
.drawing { width: 1552px; height: 944px; }
.thick, .thick2 { fill: none; stroke: #000; stroke-width: 2; }
.thick2 { stroke-width: 1.800; }
.thin15 { stroke-width: 1.200; }
.thin { fill: none; stroke: #000; stroke-width: 1; }
.hole { stroke-width: 1.600; }
.arrow { fill: #000; }
.border1 { stroke: #000; stroke-width: 2; }
.border2 { stroke: #000; stroke-width: 1; stroke-dasharray: 18 3 2 3; }
.dimtxt { font: 100 37px "Roboto", "Liberation Sans", sans-serif; fill: #111; stroke: #111; stroke-width: .25; }
.rest { font: 300 28px "Noto Sans CJK SC", sans-serif; fill: #000; }
.sheetname { font: 13px "Liberation Sans", sans-serif; fill: #222; }

.status { height: 22px; flex: none; display: flex; align-items: center; padding-left: 3px; font-size: 11px; -webkit-text-stroke: .2px #111; border-top: 1px solid #e8e8e8; color: #111; position: relative; }
.flag { position: absolute; left: 1829px; top: 4px; width: 16px; height: 15px; }
.sticon { position: absolute; left: 1849px; top: 3px; }
.taskbar { height: 2px; background: #1c1c1c; flex: none; }

.badge { position: absolute; left: 1901px; top: 851px; width: 48px; height: 48px; border-radius: 50%; background: linear-gradient(#2fc45a, #58d060); border: 3px solid #f4f4f4; box-shadow: 0 1px 4px rgba(0,0,0,.45); color: #fff; font: 700 13px/42px "Liberation Sans", sans-serif; padding-left: 3px; }
.watermark { position: absolute; left: 1637px; top: 985px; width: 270px; height: 90px; }
.wm1 { font: 700 42px "Noto Sans CJK SC", sans-serif; fill: #e0e0e0; fill-opacity: .85; }
.wm2 { font: 700 12.500px "Liberation Sans", sans-serif; fill: #e0e0e0; }
```
